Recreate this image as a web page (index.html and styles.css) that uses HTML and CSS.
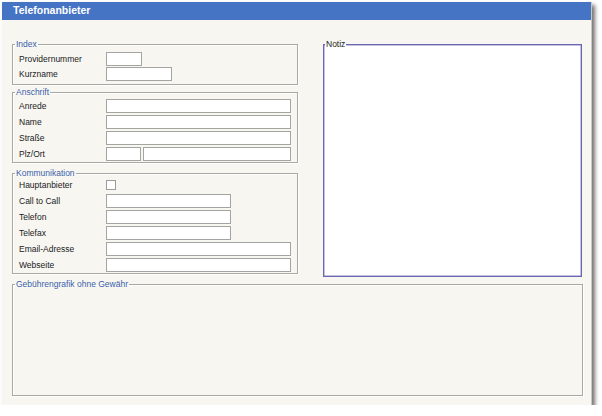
FILE: index.html
```html
<!DOCTYPE html>
<html>
<head>
<meta charset="utf-8">
<link rel="stylesheet" href="styles.css">
</head>
<body>
<div class="window">
  <div class="titlebar">Telefonanbieter</div>
  <div class="content">
    <div class="top">
      <div class="leftcol">
        <fieldset class="group g-index">
          <legend>Index</legend>
          <div class="row r15"><span class="lbl">Providernummer</span><span class="inp w36"></span></div>
          <div class="row r15"><span class="lbl">Kurzname</span><span class="inp w66"></span></div>
        </fieldset>
        <fieldset class="group g-anschrift">
          <legend>Anschrift</legend>
          <div class="row"><span class="lbl">Anrede</span><span class="inp w185"></span></div>
          <div class="row"><span class="lbl">Name</span><span class="inp w185"></span></div>
          <div class="row"><span class="lbl">Straße</span><span class="inp w185"></span></div>
          <div class="row"><span class="lbl">Plz/Ort</span><span class="inp w35"></span><span class="inp w148 ml3"></span></div>
        </fieldset>
        <fieldset class="group g-komm">
          <legend>Kommunikation</legend>
          <div class="row"><span class="lbl">Hauptanbieter</span><span class="chk"></span></div>
          <div class="row"><span class="lbl">Call to Call</span><span class="inp w125"></span></div>
          <div class="row"><span class="lbl">Telefon</span><span class="inp w125"></span></div>
          <div class="row"><span class="lbl">Telefax</span><span class="inp w125"></span></div>
          <div class="row"><span class="lbl">Email-Adresse</span><span class="inp w185"></span></div>
          <div class="row"><span class="lbl">Webseite</span><span class="inp w185"></span></div>
        </fieldset>
      </div>
      <fieldset class="notiz">
        <legend>Notiz</legend>
      </fieldset>
    </div>
    <fieldset class="group g-geb">
      <legend>Gebührengrafik ohne Gewähr</legend>
    </fieldset>
  </div>
</div>
</body>
</html>
```
FILE: styles.css
```css
html, body {
  margin: 0;
  padding: 0;
  background: #ffffff;
}
body {
  font-family: "Liberation Sans", Arial, sans-serif;
  font-size: 8.5px;
  color: #1a1a1a;
}
.window {
  margin: 2px 0 0 2px;
  width: 590px;
  height: 403px;
  background: #f7f6f1;
  box-shadow: 3px 3px 4px rgba(0,0,0,0.55);
  border-right: 1px solid #c8c8c4;
  box-sizing: border-box;
  display: flex;
  flex-direction: column;
}
.titlebar {
  height: 18px;
  background: #4674c5;
  color: #ffffff;
  font-weight: bold;
  font-size: 10.5px;
  line-height: 17px;
  padding-left: 11px;
}
.content {
  padding: 19px 9px 0 10px;
  display: flex;
  flex-direction: column;
}
.top {
  display: flex;
  justify-content: space-between;
  align-items: flex-start;
}
.leftcol {
  width: 286px;
  display: flex;
  flex-direction: column;
}
fieldset {
  margin: 0;
  min-width: 0;
}
.group {
  border: 1px solid #a9a8a2;
  box-shadow: inset 1px 1px 0 #ffffff, 1px 1px 0 #ffffff;
  padding: 0 0 0 6px;
}
.group legend {
  color: #3a5ea8;
  padding: 0 1px;
  margin-left: -4px;
  line-height: 10px;
  font-size: 8.5px;
}
.g-index { padding-top: 3px; padding-bottom: 3px; }
.g-anschrift { margin-top: 2px; padding-top: 2px; padding-bottom: 1px; }
.g-komm { margin-top: 5px; padding-top: 0; padding-bottom: 1px; }
.g-geb {
  margin-top: 2px;
  height: 115px;
  box-sizing: content-box;
  width: 563px;
}
.row {
  display: flex;
  align-items: center;
  height: 14px;
  margin-bottom: 2px;
}
.row.r15 { margin-bottom: 1px; }
.row:last-child { margin-bottom: 0; }
.lbl {
  width: 87px;
  flex: none;
}
.inp {
  display: block;
  height: 14px;
  box-sizing: border-box;
  border: 1px solid #a4a4a0;
  background: #ffffff;
  flex: none;
}
.w35 { width: 35px; }
.w36 { width: 36px; }
.w66 { width: 66px; }
.w125 { width: 125px; }
.w148 { width: 148px; }
.w185 { width: 185px; }
.ml3 { margin-left: 2px; }
.chk {
  display: block;
  width: 10px;
  height: 10px;
  box-sizing: border-box;
  border: 1px solid #9c9c98;
  background: #ffffff;
}
.notiz {
  width: 259px;
  height: 238px;
  box-sizing: border-box;
  border: 1px solid #6a66b2;
  box-shadow: inset 0 0 0 0.5px #8a86c4;
  background: #ffffff;
  padding: 0;
  margin-top: 0;
}
.notiz legend {
  color: #222222;
  padding: 0 1px 0 1px;
  margin-left: 1px;
  line-height: 10px;
  font-size: 8.5px;
  background: linear-gradient(#f7f6f1 50%, #ffffff 50%);
}
```
